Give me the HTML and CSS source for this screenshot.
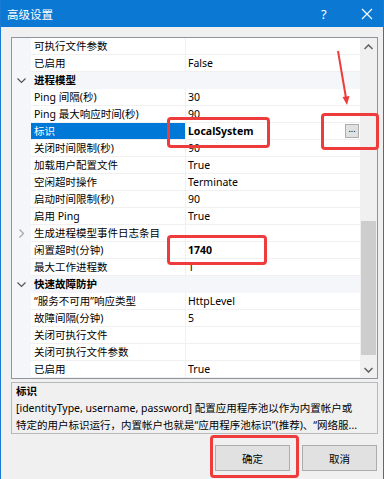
FILE: index.html
```
<!DOCTYPE html>
<html lang="zh-CN">
<head>
    <meta charset="UTF-8">
    <title>高级设置</title>
    <link rel="stylesheet" href="styles.css">
</head>
<body>

    <div class="window">
        <div class="titlebar">
            <span class="title">高级设置</span>
            <span class="help">?</span>
            <span class="close">
                <svg width="12" height="12" viewBox="0 0 12 12"><path d="M1 1 L11 11 M11 1 L1 11" stroke="#fff" stroke-width="1.2"/></svg>
            </span>
        </div>

        <div class="content">
            <div class="grid">
                <div class="rows">
                    <div class="row"><div class="gutter"></div><div class="name">可执行文件参数</div><div class="value"></div></div>
                    <div class="row"><div class="gutter"></div><div class="name">已启用</div><div class="value">False</div></div>
                    <div class="row cat"><div class="gutter"><svg width="9" height="6" viewBox="0 0 9 6"><path d="M0.5 0.5 L4.5 4.5 L8.5 0.5" fill="none" stroke="#555" stroke-width="1.2"/></svg></div><div class="name">进程模型</div></div>
                    <div class="row"><div class="gutter"></div><div class="name">Ping 间隔(秒)</div><div class="value">30</div></div>
                    <div class="row"><div class="gutter"></div><div class="name">Ping 最大响应时间(秒)</div><div class="value">90</div></div>
                    <div class="row selected"><div class="gutter"></div><div class="name">标识</div><div class="value"><b>LocalSystem</b><span class="dots">...</span></div></div>
                    <div class="row"><div class="gutter"></div><div class="name">关闭时间限制(秒)</div><div class="value">90</div></div>
                    <div class="row"><div class="gutter"></div><div class="name">加载用户配置文件</div><div class="value">True</div></div>
                    <div class="row"><div class="gutter"></div><div class="name">空闲超时操作</div><div class="value">Terminate</div></div>
                    <div class="row"><div class="gutter"></div><div class="name">启动时间限制(秒)</div><div class="value">90</div></div>
                    <div class="row"><div class="gutter"></div><div class="name">启用 Ping</div><div class="value">True</div></div>
                    <div class="row"><div class="gutter"><svg width="6" height="9" viewBox="0 0 6 9"><path d="M0.5 0.5 L4.5 4.5 L0.5 8.5" fill="none" stroke="#a6a6a6" stroke-width="1.2"/></svg></div><div class="name">生成进程模型事件日志条目</div><div class="value"></div></div>
                    <div class="row"><div class="gutter"></div><div class="name">闲置超时(分钟)</div><div class="value"><b>1740</b></div></div>
                    <div class="row"><div class="gutter"></div><div class="name">最大工作进程数</div><div class="value">1</div></div>
                    <div class="row cat"><div class="gutter"><svg width="9" height="6" viewBox="0 0 9 6"><path d="M0.5 0.5 L4.5 4.5 L8.5 0.5" fill="none" stroke="#555" stroke-width="1.2"/></svg></div><div class="name">快速故障防护</div></div>
                    <div class="row"><div class="gutter"></div><div class="name">“服务不可用”响应类型</div><div class="value">HttpLevel</div></div>
                    <div class="row"><div class="gutter"></div><div class="name">故障间隔(分钟)</div><div class="value">5</div></div>
                    <div class="row"><div class="gutter"></div><div class="name">关闭可执行文件</div><div class="value"></div></div>
                    <div class="row"><div class="gutter"></div><div class="name">关闭可执行文件参数</div><div class="value"></div></div>
                    <div class="row"><div class="gutter"></div><div class="name">已启用</div><div class="value">True</div></div>
                </div>
                <div class="scrollbar">
                    <div class="sb-btn"><svg width="9" height="6" viewBox="0 0 9 6"><path d="M0.5 5 L4.5 1 L8.5 5" fill="none" stroke="#606060" stroke-width="1.5"/></svg></div>
                    <div class="track"><div class="thumb"></div></div>
                    <div class="sb-btn"><svg width="9" height="6" viewBox="0 0 9 6"><path d="M0.5 1 L4.5 5 L8.5 1" fill="none" stroke="#606060" stroke-width="1.5"/></svg></div>
                </div>
            </div>

            <div class="desc">
                <div class="desc-title">标识</div>
                <div class="desc-text">[identityType, username, password] 配置应用程序池以作为内置帐户或</div>
                <div class="desc-text">特定的用户标识运行，内置帐户也就是“应用程序池标识”(推荐)、“网络服...</div>
            </div>

            <div class="buttons">
                <button>确定</button>
                <button>取消</button>
            </div>
        </div>

        <!-- 红色标注 -->
        <div class="mark mark-identity"></div>
        <div class="mark mark-dots"></div>
        <div class="mark mark-idle"></div>
        <div class="mark mark-ok"></div>
        <svg class="arrow" width="384" height="479" viewBox="0 0 384 479">
            <path d="M338 51 L346 98" stroke="#ee3b3b" stroke-width="2"/>
            <path d="M342.5 97 L349.5 96 L347 105 Z" fill="#ee3b3b"/>
        </svg>
    </div>

</body>
</html>
```

FILE: styles.css
```
body {
    margin: 0;
    font-family: "Noto Sans", "Noto Sans CJK SC", sans-serif;
    font-size: 10.5px;
    color: #000;
}

.window {
    position: relative;
    width: 384px;
    height: 479px;
    box-sizing: border-box;
    background: #f0f0f0;
    border-left: 1px solid #1a79d2;
    border-right: 1px solid #1a79d2;
    overflow: hidden;
}

.titlebar {
    height: 27px;
    background: #0b78d4;
    color: #fff;
    display: flex;
    align-items: center;
}

.title {
    padding-left: 6px;
    font-size: 11.5px;
    flex: 1;
}

.help {
    font-size: 13px;
    width: 14px;
    margin-right: 26px;
}

.close {
    display: flex;
    margin-right: 10px;
}

.content {
    padding: 10px 5px 0 10px;
}

.grid {
    display: flex;
    border: 1px solid #8f959c;
    background: #fff;
}

.rows {
    width: 348px;
}

.row {
    display: flex;
    height: 17px;
    line-height: 15px;
}

.gutter {
    width: 19px;
    flex: none;
    background: #f4f6f9;
    display: flex;
    align-items: center;
    justify-content: center;
}

.name {
    width: 155px;
    flex: none;
    padding: 1px 0 0 3px;
    box-sizing: border-box;
    border-right: 1px solid #f0f0f0;
    border-bottom: 1px solid #f0f0f0;
    white-space: nowrap;
    overflow: hidden;
}

.value {
    flex: 1;
    padding: 1px 1px 0 2px;
    border-bottom: 1px solid #f0f0f0;
    display: flex;
    align-items: center;
    white-space: nowrap;
}

.cat .name {
    flex: 1;
    font-weight: bold;
    background: #f4f6f9;
    border: none;
}

.selected .name {
    background: #0078d7;
    color: #fff;
}

.dots {
    margin-left: auto;
    margin-top: -1px;
    width: 12px;
    height: 12px;
    line-height: 8px;
    text-align: center;
    font-size: 9px;
    background: #e1e1e1;
    border: 1px solid #adadad;
}

.scrollbar {
    width: 17px;
    background: #f0f0f0;
    display: flex;
    flex-direction: column;
}

.sb-btn {
    height: 17px;
    display: flex;
    align-items: center;
    justify-content: center;
}

.track {
    flex: 1;
}

.thumb {
    margin: 166px 1px 0 1px;
    height: 134px;
    background: #cdcdcd;
}

.desc {
    margin-top: 3px;
    height: 52px;
    box-sizing: border-box;
    border: 1px solid #b9b9b9;
    padding: 0 4px;
    line-height: 17px;
    white-space: nowrap;
    overflow: hidden;
}

.desc-title {
    font-weight: bold;
}

.buttons {
    display: flex;
    justify-content: flex-end;
    gap: 12px;
    margin-top: 11px;
    padding-right: 1px;
}

button {
    width: 75px;
    height: 26px;
    background: #e1e1e1;
    border: 1px solid #adadad;
    font-family: "Noto Sans", "Noto Sans CJK SC", sans-serif;
    font-size: 10.5px;
    padding: 0;
}

.mark {
    position: absolute;
    border: 3.5px solid #ee3b3b;
    border-radius: 4px;
    box-sizing: border-box;
}

.mark-identity {
    left: 166px;
    top: 117px;
    width: 103px;
    height: 31px;
}

.mark-dots {
    left: 320px;
    top: 113px;
    width: 58px;
    height: 37px;
}

.mark-idle {
    left: 166px;
    top: 235px;
    width: 100px;
    height: 30px;
}

.mark-ok {
    left: 209px;
    top: 435px;
    width: 89px;
    height: 43px;
}

.arrow {
    position: absolute;
    left: -1px;
    top: 0;
    pointer-events: none;
}
```
